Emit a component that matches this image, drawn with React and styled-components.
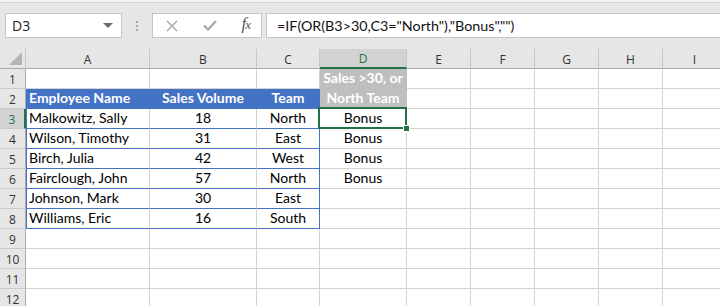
import React from "react";
import styled, { createGlobalStyle, css } from "styled-components";

const GREEN = "#217346";
const BLUE = "#4472c4";
const GRID = "#d4d4d4";

const GlobalStyle = createGlobalStyle`
  html, body {
    margin: 0;
    padding: 0;
    background: #ffffff;
  }
  body {
    width: 720px;
    height: 306px;
    overflow: hidden;
  }
`;

const columns = [
  { key: "A", width: 124 },
  { key: "B", width: 107 },
  { key: "C", width: 63 },
  { key: "D", width: 87 },
  { key: "E", width: 64 },
  { key: "F", width: 64 },
  { key: "G", width: 64 },
  { key: "H", width: 64 },
  { key: "I", width: 64 },
];

const people = [
  ["Malkowitz, Sally", 18, "North"],
  ["Wilson, Timothy", 31, "East"],
  ["Birch, Julia", 42, "West"],
  ["Fairclough, John", 57, "North"],
  ["Johnson, Mark", 30, "East"],
  ["Williams, Eric", 16, "South"],
];

const Page = styled.div`
  width: 720px;
  height: 306px;
  overflow: hidden;
  background: #e6e6e6;
`;

const Toolbar = styled.div`
  height: 49px;
  box-sizing: border-box;
  display: flex;
  align-items: flex-start;
  padding: 13px 0 0 5px;
  background: linear-gradient(#f3f3f3 0, #f3f3f3 2px, #d5d5d5 2px, #d5d5d5 3px, #e6e6e6 3px);
`;

const BoxBase = css`
  height: 25px;
  box-sizing: border-box;
  background: #ffffff;
  border: 1px solid #c6c6c6;
  display: flex;
  align-items: center;
`;

const NameBox = styled.div`
  ${BoxBase};
  width: 117px;
  padding: 0 8px 0 6px;
  justify-content: space-between;
  font-family: "Open Sans", "Noto Sans", sans-serif;
  font-size: 14px;
  color: #222;
`;

const Caret = styled.span`
  width: 0;
  height: 0;
  border-left: 5px solid transparent;
  border-right: 5px solid transparent;
  border-top: 5px solid #6b6b6b;
`;

const Grip = styled.div`
  width: 30px;
  height: 25px;
  display: flex;
  flex-direction: column;
  align-items: center;
  justify-content: center;
  gap: 2px;
  span {
    width: 2px;
    height: 2px;
    background: #a8a8a8;
  }
`;

const FuncBox = styled.div`
  ${BoxBase};
  width: 110px;
  padding: 0 11px 0 13px;
  justify-content: space-between;
`;

const FxLabel = styled.span`
  font-family: "Liberation Serif", serif;
  font-style: italic;
  font-size: 17px;
  color: #555;
  letter-spacing: -1px;
  margin-top: -3px;
  small {
    font-size: 13px;
  }
`;

const FormulaBox = styled.div`
  ${BoxBase};
  flex: 1;
  margin-left: 4px;
  margin-right: -4px;
  padding-left: 10px;
  font-family: "Lato", "Open Sans", sans-serif;
  font-size: 14.3px;
  color: #111;
`;

const Sheet = styled.div`
  display: grid;
  grid-template-columns: 26px ${columns.map((c) => `${c.width}px`).join(" ")};
  grid-auto-rows: 20px;
`;

const Corner = styled.div`
  box-sizing: border-box;
  border-right: 1px solid #c6c6c6;
  border-bottom: 1px solid #ababab;
  display: flex;
  align-items: flex-end;
  justify-content: flex-end;
  padding: 0 3px 3px 0;
`;

const ColHead = styled.div`
  box-sizing: border-box;
  display: flex;
  align-items: center;
  justify-content: center;
  padding-top: 1px;
  font-family: "Open Sans", "Noto Sans", sans-serif;
  font-size: 12px;
  color: ${(p) => (p.$active ? GREEN : "#333")};
  background: ${(p) => (p.$active ? "#d2d2d2" : "#e6e6e6")};
  border-right: 1px solid #c6c6c6;
  border-bottom: ${(p) => (p.$active ? `2px solid ${GREEN}` : "1px solid #ababab")};
`;

const RowHead = styled.div`
  box-sizing: border-box;
  display: flex;
  align-items: center;
  justify-content: center;
  padding-top: 1px;
  font-family: "Open Sans", "Noto Sans", sans-serif;
  font-size: 12px;
  color: ${(p) => (p.$active ? GREEN : "#333")};
  background: ${(p) => (p.$active ? "#d2d2d2" : "#e6e6e6")};
  border-bottom: 1px solid #c9c9c9;
  border-right: ${(p) => (p.$active ? `2px solid ${GREEN}` : "1px solid #ababab")};
`;

const Cell = styled.div`
  position: relative;
  box-sizing: border-box;
  display: flex;
  align-items: flex-end;
  justify-content: ${(p) => (p.$align === "left" ? "flex-start" : "center")};
  padding: 0 3px 1px 3px;
  line-height: 18px;
  font-family: "Lato", "Open Sans", sans-serif;
  font-size: 14px;
  font-weight: ${(p) => (p.$bold ? 700 : 400)};
  color: ${(p) => (p.$fill ? "#ffffff" : "#000")};
  white-space: nowrap;
  background: ${(p) => p.$fill || "#ffffff"};
  border-right: 1px solid ${(p) => p.$right || p.$fill || GRID};
  border-bottom: 1px solid ${(p) => p.$bottom || p.$fill || GRID};
  box-shadow: ${(p) => (p.$left ? `inset 1px 0 ${p.$left}` : "none")};
  ${(p) =>
    p.$selected &&
    css`
      &::after {
        content: "";
        position: absolute;
        left: -2px;
        top: -2px;
        right: -1px;
        bottom: -1px;
        border: 2px solid ${GREEN};
        pointer-events: none;
      }
      &::before {
        content: "";
        position: absolute;
        right: -4px;
        bottom: -4px;
        width: 5px;
        height: 5px;
        background: ${GREEN};
        border: 1px solid #ffffff;
        z-index: 2;
      }
    `}
`;

const XIcon = () => (
  <svg width="12" height="12" viewBox="0 0 12 12">
    <path d="M1 1 L11 11 M11 1 L1 11" stroke="#a6a6a6" strokeWidth="1.4" fill="none" />
  </svg>
);

const CheckIcon = () => (
  <svg width="14" height="11" viewBox="0 0 14 11">
    <path d="M1 5.5 L5 9.5 L13 1" stroke="#a6a6a6" strokeWidth="2.2" fill="none" />
  </svg>
);

const CornerTriangle = () => (
  <svg width="13" height="13" viewBox="0 0 13 13">
    <polygon points="13,0 13,13 0,13" fill="#b6b6b6" />
  </svg>
);

const buildRow = (r) => {
  const cells = {};
  if (r === 1) {
    cells.D = { text: "Sales >30, or", fill: "#bfbfbf", bold: true };
  }
  if (r === 2) {
    cells.A = { text: "Employee Name", fill: BLUE, bold: true, align: "left", bottom: BLUE };
    cells.B = { text: "Sales Volume", fill: BLUE, bold: true, bottom: BLUE };
    cells.C = { text: "Team", fill: BLUE, bold: true, bottom: BLUE };
    cells.D = { text: "North Team", fill: "#bfbfbf", bold: true };
  }
  const person = people[r - 3];
  if (person) {
    cells.A = { text: person[0], align: "left", bottom: BLUE, left: BLUE };
    cells.B = { text: person[1], bottom: BLUE };
    cells.C = { text: person[2], bottom: BLUE, right: BLUE };
    if (person[1] > 30 || person[2] === "North") cells.D = { text: "Bonus" };
    if (r === 3) cells.D = { ...cells.D, selected: true };
  }
  return cells;
};

const App = () => {
  const rows = Array.from({ length: 12 }, (_, i) => i + 1);
  return (
    <Page>
      <GlobalStyle />
      <Toolbar>
        <NameBox>
          D3
          <Caret />
        </NameBox>
        <Grip>
          <span />
          <span />
          <span />
        </Grip>
        <FuncBox>
          <XIcon />
          <CheckIcon />
          <FxLabel>
            f<small>x</small>
          </FxLabel>
        </FuncBox>
        <FormulaBox>=IF(OR(B3&gt;30,C3="North"),"Bonus","")</FormulaBox>
      </Toolbar>
      <Sheet>
        <Corner>
          <CornerTriangle />
        </Corner>
        {columns.map((c) => (
          <ColHead key={c.key} $active={c.key === "D"}>
            {c.key}
          </ColHead>
        ))}
        {rows.map((r) => {
          const cells = buildRow(r);
          return (
            <React.Fragment key={r}>
              <RowHead $active={r === 3}>{r}</RowHead>
              {columns.map((c) => {
                const cell = cells[c.key] || {};
                return (
                  <Cell
                    key={c.key}
                    $fill={cell.fill}
                    $bold={cell.bold}
                    $align={cell.align}
                    $bottom={cell.bottom}
                    $right={cell.right}
                    $left={cell.left}
                    $selected={cell.selected}
                  >
                    {cell.text}
                  </Cell>
                );
              })}
            </React.Fragment>
          );
        })}
      </Sheet>
    </Page>
  );
};

export default App;
